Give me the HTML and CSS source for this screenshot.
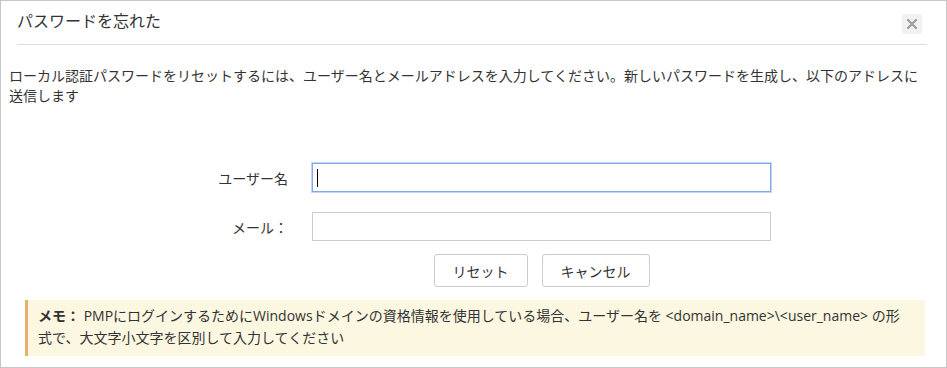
FILE: index.html
```html
<!DOCTYPE html>
<html lang="ja">
<head>
    <meta charset="UTF-8">
    <meta name="viewport" content="width=device-width, initial-scale=1.0">
    <title>パスワードを忘れた</title>
    <link rel="stylesheet" href="styles.css">
</head>
<body>
    <div class="dialog">
        <div class="dialog-header">
            <h1>パスワードを忘れた</h1>
            <button class="close-btn" title="閉じる">
                <svg width="10" height="10" viewBox="0 0 10 10">
                    <path d="M1 1 L9 9 M9 1 L1 9" stroke="#9b9b9b" stroke-width="2" stroke-linecap="square"/>
                </svg>
            </button>
        </div>

        <p class="intro">ローカル認証パスワードをリセットするには、ユーザー名とメールアドレスを入力してください。新しいパスワードを生成し、以下のアドレスに送信します</p>

        <div class="form">
            <label class="form-label">ユーザー名</label>
            <div class="field focused"><span class="caret"></span></div>

            <label class="form-label">メール：</label>
            <div class="field"></div>

            <div class="actions">
                <button class="button">リセット</button>
                <button class="button">キャンセル</button>
            </div>
        </div>

        <div class="note">
            <b>メモ：</b> PMPにログインするためにWindowsドメインの資格情報を使用している場合、ユーザー名を &lt;domain_name&gt;\&lt;user_name&gt; の形式で、大文字小文字を区別して入力してください
        </div>
    </div>
</body>
</html>
```

FILE: styles.css
```css
* {
    margin: 0;
    padding: 0;
    box-sizing: border-box;
    font-family: 'Open Sans', 'Noto Sans CJK JP', sans-serif;
}

body {
    background-color: #ffffff;
    color: #333333;
}

.dialog {
    width: 947px;
    height: 368px;
    border: 1px solid #c6c6c6;
    background: #ffffff;
}

.dialog-header {
    height: 44px;
    margin: 0 19px 0 16px;
    border-bottom: 1px solid #dddddd;
    display: flex;
    justify-content: space-between;
    align-items: center;
    padding-bottom: 1px;
}

.dialog-header h1 {
    font-size: 16px;
    font-weight: normal;
    color: #333333;
    line-height: 20px;
    margin-top: -2px;
}

.close-btn {
    width: 20px;
    height: 20px;
    border: none;
    border-radius: 3px;
    background-color: #f1f1f1;
    display: flex;
    align-items: center;
    justify-content: center;
    margin-right: 5px;
    margin-top: 3px;
    cursor: pointer;
}

.intro {
    font-size: 14px;
    line-height: 20px;
    padding: 0 20px 0 8px;
    margin-top: 21px;
}

.form {
    display: grid;
    grid-template-columns: 100px 459px;
    column-gap: 24px;
    row-gap: 20px;
    padding-left: 187px;
    margin-top: 57px;
    align-items: center;
}

.form-label {
    font-size: 14px;
    text-align: right;
    color: #333333;
}

.field {
    height: 29px;
    border: 1px solid #cccccc;
    background: #ffffff;
    display: flex;
    align-items: center;
}

.field.focused {
    border-color: #80a8ef;
    box-shadow: 0 0 0 1px #c3d6f8;
}

.caret {
    display: inline-block;
    width: 1px;
    height: 18px;
    background: #000000;
    margin-left: 4px;
}

.actions {
    grid-column: 2;
    display: flex;
    justify-content: center;
    gap: 14px;
    margin-top: -7px;
}

.button {
    height: 33px;
    padding: 0 18px;
    background-color: #ffffff;
    border: 1px solid #cccccc;
    border-radius: 3px;
    font-size: 14px;
    color: #333333;
    cursor: pointer;
}

.note {
    margin: 13px 21px 0 24px;
    background-color: #fcf7e1;
    border-left: 3px solid #e5b16e;
    padding: 5px 12px 7px 10px;
    font-size: 14px;
    line-height: 22px;
    color: #333333;
}

.note b {
    font-weight: bold;
}
```
